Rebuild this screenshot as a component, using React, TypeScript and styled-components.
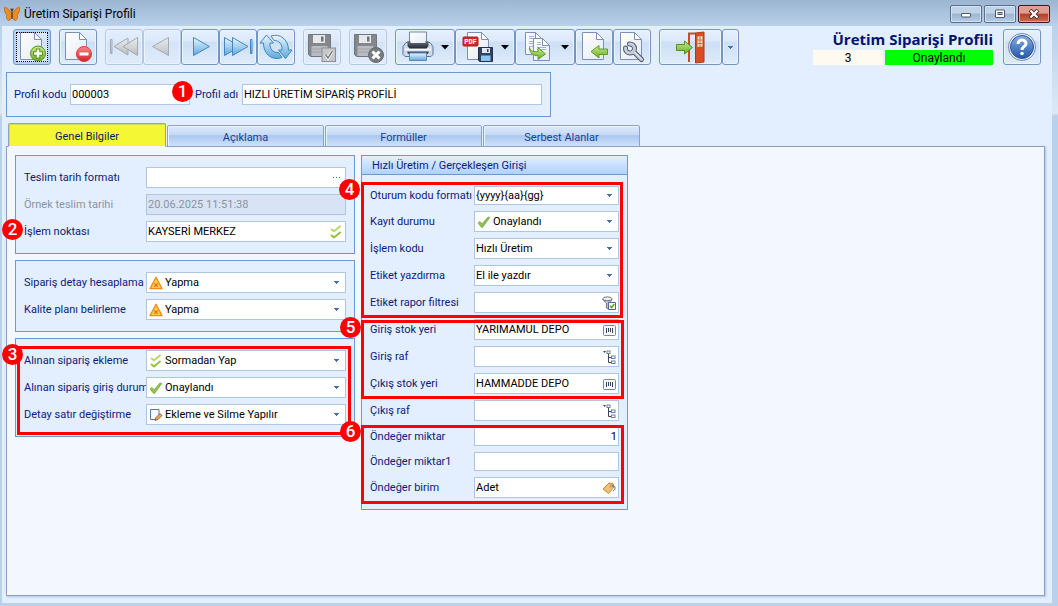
import React from "react";
import styled, { createGlobalStyle, css } from "styled-components";

const Global = createGlobalStyle`
  *, *::before, *::after { box-sizing: border-box; }
  body { margin: 0; }
  body, button, input, select {
    font-family: Roboto, "DejaVu Sans Condensed", sans-serif;
    font-size: 11px;
  }
`;

const Window = styled.div`
  display: flex;
  flex-direction: column;
  min-height: 100vh;
  padding: 0 6px 3px 2px;
  background: linear-gradient(#9bb5d2 0, #b9d1ea 26px, #dce9f7 113px, #b9d1ea 116px);
`;

const TitleBar = styled.header`
  display: flex;
  align-items: center;
  gap: 4px;
  height: 26px;
  padding: 2px 2px 0;
`;

const WindowTitle = styled.span`
  flex: 1;
  font-size: 12px;
  color: #000;
`;

const WindowButton = styled.button<{ $close?: boolean }>`
  display: grid;
  place-items: center;
  width: 32px;
  height: 18px;
  margin-left: -2px;
  padding: 0;
  border: 1px solid ${(p) => (p.$close ? "#431419" : "#5b6f89")};
  border-radius: 2px;
  box-shadow: inset 0 0 0 1px ${(p) => (p.$close ? "#e0a59d" : "#d3e2f2")};
  background: ${(p) =>
    p.$close
      ? "linear-gradient(#dd9d92 0 45%, #b93e28 50%, #cf6a50)"
      : "linear-gradient(#c1d3e7 0 45%, #9bb4d0 50%, #b6cde5)"};
`;

const Client = styled.main`
  display: flex;
  flex-direction: column;
  flex: 1;
  padding: 3px 7px 7px 4px;
  background: #e3eeff;
`;

const Toolbar = styled.div`
  display: flex;
  align-items: flex-start;
  gap: 8px;
  padding: 0 4px 0 7px;
`;

const ButtonRun = styled.div`
  display: flex;
`;

const ToolButton = styled.button<{ $w?: number; $focus?: boolean }>`
  position: relative;
  width: ${(p) => p.$w ?? 38}px;
  height: 36px;
  padding: 0;
  border: 1px solid #7596c2;
  border-radius: 3px;
  background: linear-gradient(#e6f0fd 0, #dce9fa 33%, #cddff5 36%, #deebfb 100%);
  box-shadow: inset 0 0 0 1px #eaf3ff;
  &:disabled {
    border-color: #b3c7e2;
    background: linear-gradient(#e3eefd 0, #dce9fa 33%, #d4e3f6 36%, #e0ecfb 100%);
  }
  svg { display: block; }
  ${(p) =>
    p.$focus &&
    css`
      background: linear-gradient(#dfecfc, #cfe2f8 40%, #deebfb);
      box-shadow: inset 0 0 0 2px #b5d3f6;
      &::after {
        content: "";
        position: absolute;
        inset: 2px;
        border: 1px dotted #000;
      }
    `}
`;

const StatusBlock = styled.div`
  margin-left: auto;
  margin-right: 2px;
  display: grid;
  grid-template-columns: 70px 108px;
  grid-template-rows: 21px 15px;
  column-gap: 2px;
`;

const Heading = styled.h1`
  grid-column: 1 / -1;
  margin: 0;
  text-align: right;
  white-space: nowrap;
  font: 700 15px/21px "Open Sans", "Noto Sans", sans-serif;
  color: #00146e;
`;

const StatusCell = styled.div<{ $bg: string }>`
  background: ${(p) => p.$bg};
  text-align: center;
  font-size: 12px;
  line-height: 16px;
  color: #000;
`;

const Group = styled.section`
  position: relative;
  border: 1px solid #6d99d1;
  background: #e3eeff;
`;

const ProfileGroup = styled(Group)`
  align-self: flex-start;
  display: grid;
  grid-template-columns: 56px 120px 52px 300px;
  align-items: center;
  margin-top: 7px;
  padding: 11px 8px 11px 7px;
`;

const Label = styled.label<{ $muted?: boolean; $inset?: boolean }>`
  color: ${(p) => (p.$muted ? "#8a93a3" : "#0c1c7a")};
  white-space: nowrap;
  padding-left: ${(p) => (p.$inset ? 5 : 0)}px;
`;

const FieldBox = styled.div<{ $short?: boolean; $muted?: boolean }>`
  display: grid;
  align-items: center;
  height: ${(p) => (p.$short ? 19 : 21)}px;
  border: 1px solid #aec6e6;
  background: ${(p) => (p.$muted ? "#d8e4f5" : "#fff")};
  > * { grid-area: 1 / 1; }
`;

const Leading = styled.span`
  display: flex;
  justify-self: start;
  margin-left: 2px;
  pointer-events: none;
`;

const Trailing = styled.span`
  display: flex;
  justify-self: end;
  margin-right: 2px;
  pointer-events: none;
`;

const controlStyle = css`
  width: 100%;
  min-width: 0;
  height: 100%;
  margin: 0;
  border: 0;
  outline: 0;
  background: transparent;
  color: #000;
`;

const TextBox = styled.input<{ $right?: boolean }>`
  ${controlStyle}
  padding: 0 1px;
  text-align: ${(p) => (p.$right ? "right" : "left")};
  &:disabled { color: #8a93a3; }
`;

const DropDown = styled.select<{ $icon?: boolean }>`
  ${controlStyle}
  appearance: none;
  padding: 0 16px 0 ${(p) => (p.$icon ? 18 : 1)}px;
`;

const TabList = styled.div`
  display: flex;
  align-items: flex-end;
  gap: 1px;
  margin: 6px 0 -1px 2px;
  height: 24px;
  z-index: 1;
`;

const Tab = styled.button<{ $active?: boolean }>`
  width: ${(p) => (p.$active ? 158 : 157)}px;
  height: ${(p) => (p.$active ? 24 : 22)}px;
  padding: 2px 0 0;
  border: 1px solid #8ba3cc;
  border-bottom-color: ${(p) => (p.$active ? "#f3f7ff" : "#8ba3cc")};
  border-radius: 2px 2px 0 0;
  color: ${(p) => (p.$active ? "#0c1c5a" : "#173f94")};
  background: ${(p) =>
    p.$active ? "#f4f734" : "linear-gradient(#dde9fb 0, #c5d9f5 45%, #a9c7f0 48%, #cfe1fa 100%)"};
  box-shadow: inset 1px 1px 0 ${(p) => (p.$active ? "#d5d95a" : "#e9f2ff")};
`;

const TabPage = styled.div`
  flex: 1;
  display: flex;
  align-items: flex-start;
  gap: 6px;
  padding: 8px;
  border: 1px solid #8ba0c8;
  background: #f3f7ff;
  box-shadow: 1px 1px 2px #b0c4e4;
`;

const Column = styled.div`
  display: flex;
  flex-direction: column;
  gap: 6px;
`;

const FormGroup = styled(Group)<{ $label: number; $field: number }>`
  --label: ${(p) => p.$label}px;
  --field: ${(p) => p.$field}px;
`;

const GroupTitle = styled.h2`
  margin: 0;
  height: 19px;
  padding-left: 10px;
  border-bottom: 1px solid #6d99d1;
  background: linear-gradient(#e3efff, #afd2ff);
  color: #0c1c7a;
  font: inherit;
  line-height: 19px;
`;

const Rows = styled.div`
  display: flex;
  flex-direction: column;
  gap: 6px;
  padding: 11px 8px;
`;

const Row = styled.div`
  display: grid;
  grid-template-columns: var(--label) var(--field);
  align-items: center;
`;

const Marked = styled.div<{ $inset: string }>`
  position: relative;
  display: flex;
  flex-direction: column;
  gap: 6px;
  &::after {
    content: "";
    position: absolute;
    inset: ${(p) => p.$inset};
    border: 3px solid #fe0000;
    pointer-events: none;
  }
`;

const Badge = styled.span<{ $x: number; $y: number }>`
  position: absolute;
  left: ${(p) => p.$x}px;
  top: ${(p) => p.$y}px;
  z-index: 2;
  width: 21px;
  height: 21px;
  border-radius: 50%;
  background: #fe0000;
  color: #fff;
  text-align: center;
  font-size: 17px;
  font-weight: 500;
  line-height: 21px;
`;

const HiddenSvg = styled.svg`
  position: absolute;
`;

/* ---------- small icons ---------- */

const Arrow = () => (
  <svg width="15" height="16" viewBox="0 0 15 16">
    <path d="M6 6h5v1h-1v1H9v1H8V8H7V7H6z" fill="#4470ad" />
  </svg>
);
const Warn = () => (
  <svg width="14" height="14" viewBox="0 0 14 14">
    <path d="M7 1.200 13 12.600H1z" fill="#ffc94a" stroke="#f08a1c" strokeWidth="1.300" strokeLinejoin="round" />
    <path d="m5.300 7.300 3.400 3.600m0-3.600-3.400 3.600" stroke="#ef6a1c" strokeWidth="1.200" />
  </svg>
);
const DoubleCheck = () => (
  <svg width="14" height="14" viewBox="0 0 14 14" fill="none" strokeWidth="2">
    <path d="m2 4 3 2.200L11.600 1" stroke="#b7d76c" />
    <path d="m2 10 3 2.400L11.600 7" stroke="#95c13f" />
  </svg>
);
const Check = () => (
  <svg width="14" height="14" viewBox="0 0 14 14">
    <path d="M1 8.200 3 6.400 5 8.800 11 2l1.800.4L5.600 12.400H4.600z" fill="#8fc253" stroke="#6da336" strokeWidth=".7" />
  </svg>
);
const EditPage = () => (
  <svg width="14" height="14" viewBox="0 0 14 14">
    <path d="M1.500 1.500h8.500v7l-3 3H1.500z" fill="#f7faff" stroke="#5b77a8" />
    <path d="m6 12.500 1-3 4-4 2 2-4 4z" fill="#e4a65a" stroke="#7c4c22" strokeWidth=".8" />
  </svg>
);
const Dots = () => (
  <svg width="13" height="14" viewBox="0 0 13 14" fill="#4470ad">
    <path d="M3 6h1v1H3zM6 6h1v1H6zM9 6h1v1H9z" />
  </svg>
);
const Filter = () => (
  <svg width="14" height="14" viewBox="0 0 14 14">
    <path d="M.8 3c0 2 2.700 3 3.600 4v5l2 .8V7c1-1 3.600-2 3.600-4" fill="#c3c9d3" stroke="#6d7686" />
    <ellipse cx="5.400" cy="2.800" rx="4.600" ry="1.900" fill="#eef1f6" stroke="#6d7686" />
    <path d="M6.500 6.500h7v7h-7z" fill="#fff" stroke="#54668a" />
    <path d="m8 9.800 1.600 1.800L12.200 8" fill="none" stroke="#55a320" strokeWidth="1.500" />
  </svg>
);
const Barcode = () => (
  <svg width="14" height="14" viewBox="0 0 14 14">
    <rect x="1.500" y="2.500" width="12" height="10" rx="1" fill="#f4f7fd" stroke="#7686b0" />
    <path d="M4.500 5v5M6.500 5v4M8.500 5v4M10.500 5v5" stroke="#34405c" />
  </svg>
);
const Tree = () => (
  <svg width="14" height="14" viewBox="0 0 14 14" fill="none">
    <path d="M1 1h3L2.500 3z" fill="#33405c" />
    <path d="M6.500 4v8.500H10M6.500 7.500H10" stroke="#3c4658" />
    <rect x="5" y="1" width="3" height="2.500" stroke="#6580b0" />
    <rect x="9.500" y="6" width="3.500" height="2.500" stroke="#6580b0" />
    <rect x="9.500" y="11" width="3.500" height="2.500" stroke="#6580b0" />
  </svg>
);
const Tag = () => (
  <svg width="14" height="14" viewBox="0 0 14 14">
    <path d="M1 8 7 2l4 .5L12 6 6.500 12.500z" fill="#f2c070" stroke="#c98a35" strokeLinejoin="round" />
    <circle cx="9.300" cy="5" r="1.200" fill="#fff" stroke="#8a6a3a" strokeWidth=".7" />
    <path d="M9.500 5c3-1 4 1 3.300 3.500L11 10" fill="none" stroke="#5d6270" />
  </svg>
);
const Butterfly = () => (
  <svg width="16" height="16" viewBox="0 0 16 16">
    <path d="M7.500 8C6 4 3 1 .5 1.500 0 4 1 8 3 9c-1.500 2 0 5.500 2 5.500 1.500 0 2.300-3 2.600-4.500zM8.500 8C10 4 13 1 15.500 1.500 16 4 15 8 13 9c1.500 2 0 5.500-2 5.500-1.500 0-2.300-3-2.600-4.500z" fill="#f08c1e" stroke="#a85c14" strokeWidth=".6" />
    <path d="M8 5v8M8 5 6.800 2.500M8 5l1.200-2.500" stroke="#4a2b12" strokeWidth="1.100" fill="none" />
  </svg>
);

/* ---------- toolbar drawings ---------- */

const Defs = () => (
  <HiddenSvg width="0" height="0" aria-hidden>
    <defs>
      <linearGradient id="paper" x1="0" y1="0" x2="1" y2="1">
        <stop offset="0" stopColor="#fff" />
        <stop offset="1" stopColor="#e3e9f3" />
      </linearGradient>
      <linearGradient id="blue" x1="0" y1="0" x2="0" y2="1">
        <stop offset="0" stopColor="#eaf6ff" />
        <stop offset="1" stopColor="#5fa8dc" />
      </linearGradient>
      <linearGradient id="gray" x1="0" y1="0" x2="0" y2="1">
        <stop offset="0" stopColor="#eceef0" />
        <stop offset="1" stopColor="#b9bdc3" />
      </linearGradient>
      <linearGradient id="green" x1="0" y1="0" x2="0" y2="1">
        <stop offset="0" stopColor="#c9ea8c" />
        <stop offset="1" stopColor="#69ad26" />
      </linearGradient>
      <linearGradient id="red" x1="0" y1="0" x2="0" y2="1">
        <stop offset="0" stopColor="#f58a8a" />
        <stop offset="1" stopColor="#d91f26" />
      </linearGradient>
      <linearGradient id="dark" x1="0" y1="0" x2="0" y2="1">
        <stop offset="0" stopColor="#707784" />
        <stop offset="1" stopColor="#20252e" />
      </linearGradient>
      <linearGradient id="help" x1="0" y1="0" x2="0" y2="1">
        <stop offset="0" stopColor="#86aee6" />
        <stop offset="1" stopColor="#2357a8" />
      </linearGradient>
    </defs>
  </HiddenSvg>
);

const Art = ({ w = 36, children }: { w?: number; children: React.ReactNode }) => (
  <svg width={w} height="34" viewBox={`0 0 ${w} 34`} fill="none" aria-hidden>
    {children}
  </svg>
);

const Page = ({ x = 6.5, y = 2.5, w = 21, h = 27 }) => (
  <g stroke="#7d8fb8" strokeLinejoin="round">
    <path d={`M${x} ${y}h${w - 7}l7 7v${h - 7}h-${w}z`} fill="url(#paper)" />
    <path d={`M${x + w - 7} ${y}v7h7z`} fill="#fff" />
  </g>
);

const MenuArrow = () => <path d="M45 15h8l-4 4.500z" fill="#000" />;

const Floppy = () => (
  <>
    <path d="M4.500 4.500h22v22h-20l-2-2z" fill="#84888e" stroke="#72767c" />
    <path d="M9 5h12v8H9z" fill="#e6e8ea" />
    <path d="M17 6.500h2.500v5H17z" fill="#6f7379" />
    <path d="M7.500 16h16v10h-16z" fill="#b9bcc0" />
    <path d="M7.500 19h16M7.500 22h16" stroke="#a0a4a9" />
  </>
);

const NewDoc = () => (
  <Art>
    <Page />
    <circle cx="24" cy="23.500" r="7.500" fill="url(#green)" stroke="#5a9422" />
    <path d="M24 18.500v10M19 23.500h10" stroke="#5a9422" strokeWidth="4.500" />
    <path d="M24 19.500v8M20 23.500h8" stroke="#fff" strokeWidth="2.500" />
  </Art>
);
const DeleteDoc = () => (
  <Art>
    <Page x={5.5} />
    <circle cx="24" cy="24" r="7.500" fill="url(#red)" stroke="#dc3a40" />
    <path d="M19.500 24h9" stroke="#fff" strokeWidth="3" />
  </Art>
);
const First = () => (
  <Art>
    <g fill="url(#gray)" stroke="#a3a9b1" strokeLinejoin="round">
      <path d="M4.500 9.500h1.500v14H4.500z" />
      <path d="M8 16.500 22 8v17z" />
      <path d="M17 16.500 31.500 7.500v18z" />
    </g>
  </Art>
);
const Prev = () => (
  <Art>
    <path d="M8.500 16.500 24.500 7.500v18z" fill="url(#gray)" stroke="#a3a9b1" strokeLinejoin="round" />
  </Art>
);
const Next = () => (
  <Art>
    <path d="M27.500 16.500 11.500 7.500v18z" fill="url(#blue)" stroke="#4585c4" strokeLinejoin="round" />
  </Art>
);
const Last = () => (
  <Art>
    <g fill="url(#blue)" stroke="#4585c4" strokeLinejoin="round">
      <path d="M20 16.500 4.500 7.500v18z" />
      <path d="M28 16.500 12.500 7.500v18z" />
      <path d="M30.500 9.500H32v14h-1.500z" />
    </g>
  </Art>
);
const Refresh = () => (
  <Art>
    <g fill="url(#blue)" stroke="#3f86bf" strokeLinejoin="round">
      <path d="M8.500 5 15.500 13H12c-.5 6 3 10 8.500 9.500l3.500 5C15 31 5.500 25 5.500 13H2z" />
      <path d="M27.500 28.500 20.500 20H24c.5-6-3-9.500-8-9.500L13 6c9-3 17.500 3.500 17.500 14H34z" />
    </g>
  </Art>
);
const SaveOk = () => (
  <Art>
    <Floppy />
    <rect x="18" y="18" width="13.500" height="13.500" fill="#c5c7ca" stroke="#8b8f94" />
    <path d="m21.500 24.500 2.500 3.500 4.500-7" stroke="#fff" strokeWidth="3" />
    <path d="m21.500 24.500 2.500 3.500 4.500-7" stroke="#777b80" strokeWidth="1.500" />
  </Art>
);
const SaveCancel = () => (
  <Art>
    <Floppy />
    <circle cx="26" cy="25" r="7.500" fill="#777b81" stroke="#686c72" />
    <path d="m22.500 21.500 7 7m0-7-7 7" stroke="#fff" strokeWidth="3" />
  </Art>
);
const Print = () => (
  <Art w={58}>
    <path d="M10 12.500h24l3 4v8l-2 2H9l-2-2v-8z" fill="#cfd9ea" stroke="#5f7398" />
    <path d="M9 19.500h26" stroke="#f6f9ff" strokeWidth="2" />
    <path d="M13.500 2h17v12h-17z" fill="url(#paper)" stroke="#7386ac" />
    <path d="M11.500 11h3v2h15v-2h3v5l-2 2.500h-17l-2-2.500z" fill="url(#dark)" />
    <path d="M11 21.500h22l-1 2.500H12z" fill="#3d4960" />
    <path d="M13.500 23h17v7.500h-17z" fill="url(#blue)" stroke="#5b86b8" />
    <MenuArrow />
  </Art>
);
const Pdf = () => (
  <Art w={58}>
    <Page x={11.5} />
    <rect x="7" y="7" width="15" height="9" rx="1" fill="#cf2a2a" stroke="#ae1a1c" />
    <text x="14.500" y="14" textAnchor="middle" fontSize="7" fontWeight="700" fontFamily="Liberation Mono" fill="#fff">PDF</text>
    <path d="M22.500 17.500h14v14h-13l-1-1z" fill="#31435f" stroke="#22304a" />
    <path d="M26 18h8v5h-8z" fill="#e2e8f2" />
    <path d="M31 19h1.500v3H31z" fill="#31435f" />
    <path d="M25 25.500h9.500V31H25z" fill="#8ac4f0" />
    <MenuArrow />
  </Art>
);
const Copy = () => (
  <Art w={58}>
    <Page x={9.5} y={2.5} w={17} h={22} />
    <path d="M13 6.500h5M13 8.500h5M13 11.500h5M13 13.500h5M13 16.500h5" stroke="#a3b3d6" />
    <Page x={17.5} y={8.5} w={16} h={22} />
    <path d="M21 12.500h4M21 14.500h4M21 17.500h9M21 19.500h9" stroke="#a3b3d6" />
    <path d="M13.500 17.500c1 4 4.500 4.500 8.500 4v-4l7.500 6.500-7.500 5.500v-4c-5 .5-8.500-2.500-8.500-8z" fill="url(#green)" stroke="#5f9b26" strokeLinejoin="round" />
    <MenuArrow />
  </Art>
);
const BackDoc = () => (
  <Art>
    <Page />
    <path d="M15 21.500 23 15.500v3.500h8.500v5.500H23v3.500z" fill="url(#green)" stroke="#5f9b26" strokeLinejoin="round" />
  </Art>
);
const Wrench = () => (
  <Art>
    <Page />
    <g strokeLinecap="round">
      <path d="M15.500 14A4.500 4.500 0 1 1 11.500 18M19.500 21.500l8 8" stroke="#4f5a72" strokeWidth="5" />
      <path d="M15.500 14A4.500 4.500 0 1 1 11.500 18M19.500 21.500l8 8" stroke="#c6cedb" strokeWidth="3" />
      <path d="m21 22.500 6 6" stroke="#eef1f6" />
    </g>
  </Art>
);
const Exit = () => (
  <Art w={61}>
    <path d="M29 32V3.500h7" stroke="#d2491f" strokeWidth="2" />
    <path d="m35.500 3 8.500-1v30l-8.500 1z" fill="#d84e22" stroke="#b03a14" />
    <path d="M37.500 6.500 42.500 6v10.500l-5 .5z" fill="#f7e3c0" />
    <path d="M40 6v11M37.500 10h5M37.500 13.500h5" stroke="#c8754b" />
    <path d="M16.500 14.500h8v-3.500l8 6.500-8 6.500v-3.500h-8z" fill="url(#green)" stroke="#4f9125" strokeLinejoin="round" />
  </Art>
);
const Help = () => (
  <Art>
    <circle cx="18" cy="17" r="13.500" fill="#eef4fd" stroke="#6f86b4" />
    <circle cx="18" cy="17" r="11.500" fill="url(#help)" stroke="#2c559c" />
    <path d="M14 14c0-5.500 8.500-5 8 0-.3 2.500-4 2.500-4 6" stroke="#fff" strokeWidth="3" />
    <circle cx="18" cy="23.500" r="1.800" fill="#fff" />
  </Art>
);

/* ---------- form parts ---------- */

type FieldProps = {
  id: string;
  label: string;
  value?: string;
  kind?: "text" | "select";
  lead?: React.ReactNode;
  trail?: React.ReactNode;
  short?: boolean;
  muted?: boolean;
  right?: boolean;
  inset?: boolean;
};

const Field = ({ id, label, value = "", kind = "text", lead, trail, short, muted, right, inset }: FieldProps) => (
  <>
    <Label htmlFor={id} $muted={muted} $inset={inset}>
      {label}
    </Label>
    <FieldBox $short={short} $muted={muted}>
      {kind === "select" ? (
        <DropDown id={id} $icon={!!lead} defaultValue={value}>
          <option>{value}</option>
        </DropDown>
      ) : (
        <TextBox id={id} defaultValue={value} disabled={muted} $right={right} />
      )}
      {lead && <Leading>{lead}</Leading>}
      {kind === "select" ? (
        <Trailing>
          <Arrow />
        </Trailing>
      ) : (
        trail && <Trailing>{trail}</Trailing>
      )}
    </FieldBox>
  </>
);

const FieldRow = (props: FieldProps) => (
  <Row>
    <Field {...props} />
  </Row>
);

export default function App() {
  return (
    <Window>
      <Global />
      <Defs />
      <TitleBar>
        <Butterfly />
        <WindowTitle>Üretim Siparişi Profili</WindowTitle>
        <WindowButton aria-label="Simge durumuna küçült">
          <svg width="12" height="10" viewBox="0 0 12 10">
            <rect x="1.500" y="4.500" width="9" height="3.500" rx=".5" fill="#fff" stroke="#4b5668" />
          </svg>
        </WindowButton>
        <WindowButton aria-label="Ekranı kapla">
          <svg width="12" height="10" viewBox="0 0 12 10">
            <rect x="1.500" y="1" width="9" height="7.500" rx=".5" fill="#fff" stroke="#4b5668" />
            <rect x="4" y="3.500" width="4" height="2" fill="#a9bfd8" stroke="#4b5668" />
          </svg>
        </WindowButton>
        <WindowButton $close aria-label="Kapat">
          <svg width="12" height="10" viewBox="0 0 12 10">
            <path d="m2 1 8 8m0-8L2 9" stroke="#5a2a2a" strokeWidth="4" />
            <path d="m2.500 1.500 7 7m0-7-7 7" stroke="#fff" strokeWidth="2.200" />
          </svg>
        </WindowButton>
      </TitleBar>

      <Client>
        <Toolbar>
          <ToolButton $focus aria-label="Yeni"><NewDoc /></ToolButton>
          <ToolButton aria-label="Sil"><DeleteDoc /></ToolButton>
          <ButtonRun>
            <ToolButton disabled aria-label="İlk"><First /></ToolButton>
            <ToolButton disabled aria-label="Önceki"><Prev /></ToolButton>
            <ToolButton aria-label="Sonraki"><Next /></ToolButton>
            <ToolButton aria-label="Son"><Last /></ToolButton>
            <ToolButton aria-label="Yenile"><Refresh /></ToolButton>
          </ButtonRun>
          <ToolButton disabled aria-label="Kaydet"><SaveOk /></ToolButton>
          <ToolButton disabled aria-label="Vazgeç"><SaveCancel /></ToolButton>
          <ButtonRun>
            <ToolButton $w={60} aria-label="Yazdır"><Print /></ToolButton>
            <ToolButton $w={60} aria-label="PDF kaydet"><Pdf /></ToolButton>
            <ToolButton $w={60} aria-label="Kopyala"><Copy /></ToolButton>
            <ToolButton aria-label="Aktar"><BackDoc /></ToolButton>
            <ToolButton aria-label="Ayarlar"><Wrench /></ToolButton>
          </ButtonRun>
          <ButtonRun>
            <ToolButton $w={63} aria-label="Çıkış"><Exit /></ToolButton>
            <ToolButton $w={17} aria-label="Çıkış seçenekleri">
              <svg width="15" height="34" viewBox="0 0 15 34">
                <path d="M5 16h5v1H9v1H8v1H7v-1H6v-1H5z" fill="#4470ad" />
              </svg>
            </ToolButton>
          </ButtonRun>
          <StatusBlock>
            <Heading>Üretim Siparişi Profili</Heading>
            <StatusCell $bg="#fffaf0">3</StatusCell>
            <StatusCell $bg="#00ff00">Onaylandı</StatusCell>
          </StatusBlock>
          <ToolButton aria-label="Yardım"><Help /></ToolButton>
        </Toolbar>

        <ProfileGroup>
          <Field id="code" label="Profil kodu" value="000003" />
          <Field id="name" label="Profil adı" value="HIZLI ÜRETİM SİPARİŞ PROFİLİ" inset />
          <Badge $x={165} $y={8}>1</Badge>
        </ProfileGroup>

        <TabList role="tablist">
          <Tab role="tab" aria-selected $active>Genel Bilgiler</Tab>
          <Tab role="tab">Açıklama</Tab>
          <Tab role="tab">Formüller</Tab>
          <Tab role="tab">Serbest Alanlar</Tab>
        </TabList>

        <TabPage role="tabpanel">
          <Column>
            <FormGroup $label={122} $field={200}>
              <Rows>
                <FieldRow id="dateFormat" label="Teslim tarih formatı" trail={<Dots />} />
                <FieldRow id="dateSample" label="Örnek teslim tarihi" value="20.06.2025 11:51:38" muted />
                <FieldRow id="point" label="İşlem noktası" value="KAYSERİ MERKEZ" trail={<DoubleCheck />} />
              </Rows>
              <Badge $x={-14} $y={63}>2</Badge>
            </FormGroup>
            <FormGroup $label={122} $field={200}>
              <Rows>
                <FieldRow id="detail" kind="select" label="Sipariş detay hesaplama" value="Yapma" lead={<Warn />} />
                <FieldRow id="quality" kind="select" label="Kalite planı belirleme" value="Yapma" lead={<Warn />} />
              </Rows>
            </FormGroup>
            <FormGroup $label={122} $field={200}>
              <Rows>
                <Marked $inset="-4px -5px -10px -7px">
                  <FieldRow id="add" kind="select" label="Alınan sipariş ekleme" value="Sormadan Yap" lead={<DoubleCheck />} />
                  <FieldRow id="state" kind="select" label="Alınan sipariş giriş durum" value="Onaylandı" lead={<Check />} />
                  <FieldRow id="line" kind="select" label="Detay satır değiştirme" value="Ekleme ve Silme Yapılır" lead={<EditPage />} />
                  <Badge $x={-22} $y={-6}>3</Badge>
                </Marked>
              </Rows>
            </FormGroup>
          </Column>

          <FormGroup $label={104} $field={145}>
            <GroupTitle>Hızlı Üretim / Gerçekleşen Girişi</GroupTitle>
            <Rows>
              <Marked $inset="-4px -4px -5px -9px">
                <FieldRow id="session" kind="select" label="Oturum kodu formatı" value="{yyyy}{aa}{gg}" short />
                <FieldRow id="record" kind="select" label="Kayıt durumu" value="Onaylandı" lead={<Check />} />
                <FieldRow id="op" kind="select" label="İşlem kodu" value="Hızlı Üretim" />
                <FieldRow id="print" kind="select" label="Etiket yazdırma" value="El ile yazdır" />
                <FieldRow id="filter" label="Etiket rapor filtresi" trail={<Filter />} />
                <Badge $x={-31} $y={-7}>4</Badge>
              </Marked>
              <Marked $inset="1px -5px -5px -9px">
                <FieldRow id="inStock" label="Giriş stok yeri" value="YARIMAMUL DEPO" trail={<Barcode />} />
                <FieldRow id="inShelf" label="Giriş raf" trail={<Tree />} />
                <FieldRow id="outStock" label="Çıkış stok yeri" value="HAMMADDE DEPO" trail={<Barcode />} />
                <Badge $x={-30} $y={-2}>5</Badge>
              </Marked>
              <FieldRow id="outShelf" label="Çıkış raf" trail={<Tree />} />
              <Marked $inset="-2px -5px -6px -9px">
                <FieldRow id="qty" label="Öndeğer miktar" value="1" short right />
                <FieldRow id="qty1" label="Öndeğer miktar1" short />
                <FieldRow id="unit" label="Öndeğer birim" value="Adet" trail={<Tag />} />
                <Badge $x={-30} $y={-6}>6</Badge>
              </Marked>
            </Rows>
          </FormGroup>
        </TabPage>
      </Client>
    </Window>
  );
}
